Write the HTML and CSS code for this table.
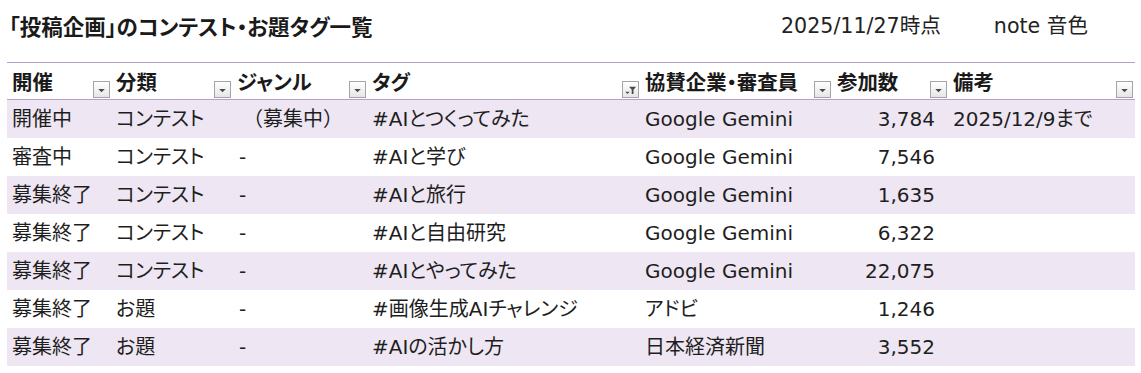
FILE: index.html
```html
<!DOCTYPE html>
<html lang="ja">
<head>
<meta charset="utf-8">
<link rel="stylesheet" href="styles.css">
</head>
<body>
<div class="page">
  <header class="top">
    <h1 class="title">「投稿企画」のコンテスト・お題タグ一覧</h1>
    <div class="meta">
      <span class="date">2025/11/27時点</span>
      <span class="author">note 音色</span>
    </div>
  </header>
  <table class="sheet">
    <colgroup>
      <col class="c1"><col class="c2"><col class="c3"><col class="c4"><col class="c5"><col class="c6"><col class="c7">
    </colgroup>
    <thead>
      <tr>
        <th><div class="hcell"><span class="hl">開催</span><span class="dd"><svg viewBox="0 0 16 16"><path d="M4.5 7.5h7l-3.5 3.5z"/></svg></span></div></th>
        <th><div class="hcell"><span class="hl">分類</span><span class="dd"><svg viewBox="0 0 16 16"><path d="M4.5 7.5h7l-3.5 3.5z"/></svg></span></div></th>
        <th><div class="hcell"><span class="hl">ジャンル</span><span class="dd"><svg viewBox="0 0 16 16"><path d="M4.5 7.5h7l-3.5 3.5z"/></svg></span></div></th>
        <th><div class="hcell"><span class="hl">タグ</span><span class="dd"><svg viewBox="0 0 16 16"><path d="M2.5 10.5h4.5l-2.25 2.25z"/><path d="M6.5 5h7.5l-2.8 3.3v4.5h-1.9v-4.5z"/></svg></span></div></th>
        <th><div class="hcell"><span class="hl">協賛企業・審査員</span><span class="dd"><svg viewBox="0 0 16 16"><path d="M4.5 7.5h7l-3.5 3.5z"/></svg></span></div></th>
        <th><div class="hcell"><span class="hl">参加数</span><span class="dd"><svg viewBox="0 0 16 16"><path d="M4.5 7.5h7l-3.5 3.5z"/></svg></span></div></th>
        <th><div class="hcell"><span class="hl">備考</span><span class="dd"><svg viewBox="0 0 16 16"><path d="M4.5 7.5h7l-3.5 3.5z"/></svg></span></div></th>
      </tr>
    </thead>
    <tbody>
      <tr><td>開催中</td><td>コンテスト</td><td class="genre">（募集中）</td><td>#AIとつくってみた</td><td>Google Gemini</td><td class="num">3,784</td><td>2025/12/9まで</td></tr>
      <tr><td>審査中</td><td>コンテスト</td><td class="dash">-</td><td>#AIと学び</td><td>Google Gemini</td><td class="num">7,546</td><td></td></tr>
      <tr><td>募集終了</td><td>コンテスト</td><td class="dash">-</td><td>#AIと旅行</td><td>Google Gemini</td><td class="num">1,635</td><td></td></tr>
      <tr><td>募集終了</td><td>コンテスト</td><td class="dash">-</td><td>#AIと自由研究</td><td>Google Gemini</td><td class="num">6,322</td><td></td></tr>
      <tr><td>募集終了</td><td>コンテスト</td><td class="dash">-</td><td>#AIとやってみた</td><td>Google Gemini</td><td class="num">22,075</td><td></td></tr>
      <tr><td>募集終了</td><td>お題</td><td class="dash">-</td><td>#画像生成AIチャレンジ</td><td>アドビ</td><td class="num">1,246</td><td></td></tr>
      <tr><td>募集終了</td><td>お題</td><td class="dash">-</td><td>#AIの活かし方</td><td>日本経済新聞</td><td class="num">3,552</td><td></td></tr>
    </tbody>
  </table>
</div>
</body>
</html>
```

FILE: styles.css
```css
* { box-sizing: border-box; }
html, body { margin: 0; padding: 0; background: #ffffff; }
body {
  font-family: "DejaVu Sans", "Noto Sans CJK JP", sans-serif;
  color: #1e1e1e;
  font-feature-settings: "palt";
}
.page {
  padding: 10px 6px 0 7px;
}
.top {
  display: flex;
  align-items: center;
  height: 32px;
  margin-bottom: 20px;
}
.title {
  margin: 0 0 0 2px;
  font-family: "Noto Sans CJK JP", sans-serif;
  font-size: 21.5px;
  font-weight: 700;
  line-height: 32px;
  color: #1a1a1a;
}
.meta {
  margin-left: auto;
  display: flex;
  gap: 53px;
  padding-right: 47px;
  font-size: 20.6px;
  line-height: 32px;
  color: #222;
}
.sheet {
  border-collapse: collapse;
  table-layout: fixed;
  width: 1128px;
  font-size: 20px;
}
.c1 { width: 105px; }
.c2 { width: 121px; }
.c3 { width: 135px; }
.c4 { width: 273px; }
.c5 { width: 192px; }
.c6 { width: 116px; }
.c7 { width: 186px; }
.sheet th {
  border-top: 1px solid #b59fcc;
  border-bottom: 1px solid #b59fcc;
  height: 37px;
  padding: 0 2px 0 5px;
  text-align: left;
  vertical-align: bottom;
}
.sheet th:nth-child(n+2) { padding-left: 4px; }
.hcell {
  display: flex;
  justify-content: space-between;
  align-items: flex-end;
  height: 36px;
}
.hl {
  font-family: "Noto Sans CJK JP", sans-serif;
  font-weight: 700;
  font-size: 20.4px;
  line-height: 36px;
  color: #1a1a1a;
  align-self: center;
  white-space: nowrap;
}
.dd {
  flex: none;
  width: 17px;
  height: 17px;
  margin-bottom: 1px;
  border: 1px solid #a5a5a5;
  background: linear-gradient(#ffffff, #e6e6e6);
  display: flex;
}
.dd svg {
  width: 15px;
  height: 15px;
  fill: #4a4a4a;
}
.sheet td {
  height: 38px;
  padding: 0 4px 0 4px;
  white-space: nowrap;
  line-height: 38px;
}
.sheet td:first-child { padding-left: 5px; }
.sheet tbody tr:nth-child(odd) td { background: #eee6f2; }
.sheet td.num {
  text-align: right;
  padding-right: 14px;
}
.sheet td.dash { padding-left: 6px; }
.sheet td.genre {
  padding-left: 10px;
  font-feature-settings: normal;
}
```
